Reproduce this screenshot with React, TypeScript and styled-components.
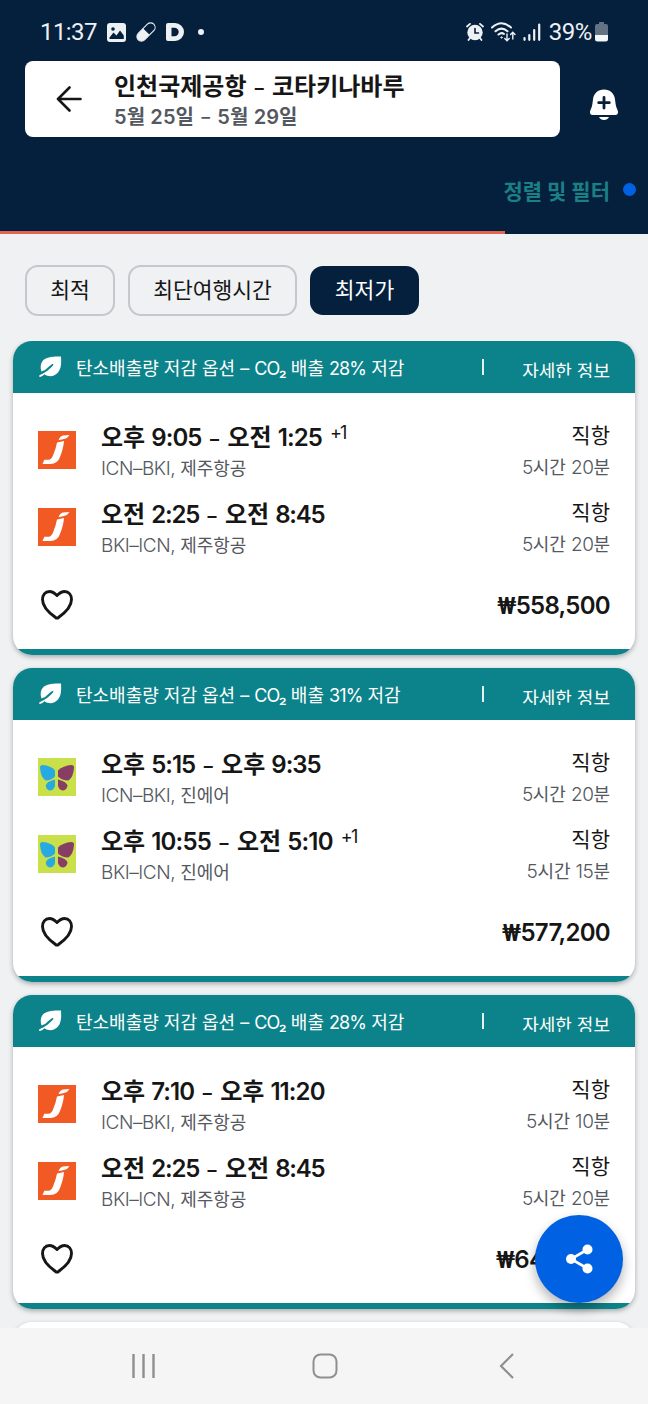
import React from 'react';
import styled, { createGlobalStyle } from 'styled-components';

const navy = '#05203c';
const teal = '#0c838a';
const ink = '#161616';
const muted = '#545860';
const sans = "Inter, 'Noto Sans CJK KR', sans-serif";

const GlobalStyle = createGlobalStyle`
  * { box-sizing: border-box; }
  body { margin: 0; background: #eff1f2; font-family: ${sans}; color: ${ink}; }
  svg { display: block; flex: none; }
`;

const Screen = styled.div`
  width: 648px;
  height: 1404px;
  display: flex;
  flex-direction: column;
  overflow: hidden;
  background: #eff1f3;
`;

const Header = styled.header`
  height: 234px;
  flex: none;
  display: flex;
  flex-direction: column;
  background: ${navy};
`;

const StatusBar = styled.div`
  height: 61px;
  padding: 3px 40px 0;
  display: flex;
  align-items: center;
  justify-content: space-between;
  color: #eef1f4;
  font-family: Roboto, sans-serif;
  font-size: 24px;
`;

const StatusGroup = styled.div<{ $gap: number }>`
  display: flex;
  align-items: center;
  gap: ${p => p.$gap}px;
`;

const Txt = styled.span<{ $track?: number }>`
  letter-spacing: ${p => p.$track ?? 0}px;
  white-space: nowrap;
`;

const BatteryLevel = styled(Txt)`
  margin: 0 -4px 0 1px;
`;

const SearchRow = styled.div`
  height: 76px;
  padding: 0 29px 0 25px;
  display: flex;
  align-items: center;
  justify-content: space-between;
`;

const SearchBox = styled.div`
  width: 535px;
  height: 76px;
  padding-left: 31px;
  display: flex;
  align-items: center;
  gap: 32px;
  border-radius: 8px;
  background: #fff;
`;

const AlertButton = styled.div`
  padding-top: 12px;
`;

const RouteText = styled.div`
  padding-top: 5px;
  display: flex;
  flex-direction: column;
`;

const RouteTitle = styled(Txt)`
  font-size: 24px;
  line-height: 31px;
  font-weight: 700;
`;

const RouteDates = styled(Txt)`
  font-size: 20px;
  line-height: 30px;
  font-weight: 600;
  color: ${muted};
`;

const FilterRow = styled.div`
  flex: 1;
  padding: 11px 12px 0 13px;
  display: flex;
  align-items: center;
  justify-content: flex-end;
  gap: 13px;
  color: #1b7f86;
  font-size: 21px;
  font-weight: 700;
`;

const FilterDot = styled.span`
  width: 13px;
  height: 13px;
  border-radius: 50%;
  background: #0062e3;
`;

const Progress = styled.div`
  width: 505px;
  height: 3px;
  background: #e2654f;
`;

const Chips = styled.div`
  height: 107px;
  flex: none;
  padding: 5px 0 0 25px;
  display: flex;
  align-items: center;
  gap: 13px;
`;

const Chip = styled.button<{ $w: number; $active?: boolean }>`
  width: ${p => p.$w}px;
  height: ${p => (p.$active ? 49 : 51)}px;
  padding: 0 0 4px;
  border: ${p => (p.$active ? '0' : '2px solid #c3c8cb')};
  border-radius: 13px;
  background: ${p => (p.$active ? navy : 'transparent')};
  color: ${p => (p.$active ? '#fff' : ink)};
  font-family: ${sans};
  font-size: 21.5px;
`;

const List = styled.main`
  height: 987px;
  flex: none;
  padding: 0 13px;
  display: flex;
  flex-direction: column;
  gap: 13px;
  overflow: hidden;
`;

const Card = styled.article`
  height: 314px;
  flex: none;
  display: flex;
  flex-direction: column;
  overflow: hidden;
  border-radius: 19px;
  background: #fff;
  box-shadow: 0 2px 5px rgba(0, 0, 0, 0.3);
`;

const CardBase = styled.div`
  height: 6px;
  flex: none;
  background: ${teal};
`;

const EcoBar = styled.div`
  height: 52px;
  flex: none;
  padding: 0 25px;
  display: flex;
  align-items: center;
  background: ${teal};
  color: #fff;
  font-size: 18px;
`;

const EcoLabel = styled(Txt)`
  width: 420px;
  flex: none;
  padding: 0 0 1px 14px;
`;

const Divider = styled.span`
  width: 2px;
  height: 16px;
  background: #e3f1f1;
`;

const MoreInfo = styled.span`
  height: 16px;
  margin: 5px 0 0 auto;
  overflow: hidden;
  line-height: 20px;
`;

const CardBody = styled.div`
  flex: 1;
  padding: 27px 25px 0 25px;
  display: flex;
  flex-direction: column;
`;

const Legs = styled.div`
  display: flex;
  flex-direction: column;
  gap: 15px;
`;

const Leg = styled.div`
  height: 62px;
  display: flex;
  align-items: center;
`;

const Logo = styled.div`
  padding-bottom: 2px;
`;

const LegInfo = styled.div`
  margin-left: 25px;
  padding-top: 1px;
  flex: 1;
  display: flex;
  flex-direction: column;
`;

const LegEnd = styled.div`
  display: flex;
  flex-direction: column;
  align-items: flex-end;
`;

const Times = styled(Txt)`
  font-size: 24px;
  line-height: 34px;
  height: 34px;
  font-weight: 600;
`;

const NextDay = styled.sup`
  margin-left: 8px;
  font-size: 18px;
  letter-spacing: -1.7px;
  line-height: 1;
  font-weight: 400;
  vertical-align: 7px;
`;

const Dash = styled.span<{ $size: number; $gap: number }>`
  margin: 0 ${p => p.$gap}px;
  font-size: ${p => p.$size}px;
  line-height: 1;
  vertical-align: 1px;
`;

const Stops = styled(Txt)`
  font-size: 21px;
  line-height: 32px;
  padding-bottom: 2px;
`;

const Small = styled(Txt)`
  font-size: 18px;
  line-height: 28px;
  height: 28px;
  color: ${muted};
`;

const LightLatin = styled.span`
  font-size: 19px;
  font-weight: 350;
  letter-spacing: -0.45px;
`;

const CardFooter = styled.div`
  height: 60px;
  margin-top: 16px;
  padding-left: 3px;
  display: flex;
  align-items: center;
  justify-content: space-between;
`;

const Price = styled(Txt)`
  font-size: 24px;
  font-weight: 600;
`;

const Won = styled.span`
  font-family: Roboto, sans-serif;
  font-weight: 600;
`;

const NavBar = styled.nav`
  height: 76px;
  flex: none;
  padding: 0 134px 0 131px;
  display: flex;
  align-items: center;
  justify-content: space-between;
  background: #f5f5f5;
`;

const HomeKey = styled.div`
  margin-right: 5px;
`;

const ShareButton = styled.button`
  position: absolute;
  left: 535px;
  top: 1215px;
  width: 88px;
  height: 88px;
  padding: 0;
  border: 0;
  border-radius: 50%;
  display: flex;
  align-items: center;
  justify-content: center;
  background: #0062e3;
  box-shadow: 0 6px 12px rgba(0, 0, 0, 0.3);
`;

const JejuLogo = () => (
  <svg width="38" height="38" viewBox="0 0 38 38">
    <rect width="38" height="38" fill="#f15a22" />
    <path d="M20.500 9.300Q22 5 25 4.600L31.500 4Q29.500 7.500 26 8.100Z" fill="#fff" />
    <path d="M19 11.500L26 10Q25.500 17 22 26Q19.500 33 12.500 33H4.500L6.300 28.800H10.500Q13.500 28.500 15 24.500Q17.800 18 19 11.500Z" fill="#fff" />
  </svg>
);

const JinLogo = () => (
  <svg width="38" height="38" viewBox="0 0 38 38">
    <rect width="38" height="38" fill="#c9e04b" />
    <path d="M2 9.500Q2 7 4.500 7Q13 7.500 17 12.500V18.500Q13 22.500 7.500 22.500Q2.500 19 2 9.500Z" fill="#27a9e1" />
    <path d="M36 9.500Q36 7 33.500 7Q25 7.500 20 12.500V18.500Q24 22.500 30.500 22.500Q35.500 19 36 9.500Z" fill="#873d64" />
    <path d="M17 21.500V28Q15.500 32.500 11.500 32.500Q8 31.500 7.800 27.500Q8.500 23.500 17 21.500Z" fill="#27a9e1" />
    <path d="M20 21.500V28Q21.500 32.500 25.500 32.500Q29 31.500 29.500 27.500Q28.500 23.500 20 21.500Z" fill="#873d64" />
  </svg>
);

const LeafIcon = () => (
  <svg width="24" height="22" viewBox="0 0 24 22">
    <path d="M23 0.500C15 0.500 9.500 1 6 3.500C2.500 6.500 2 11 3.500 15.500Q7.500 14.500 11 10.500L14.200 8Q15.800 7.600 15.200 9.200C12.500 12.500 8 16.500 1.500 19.300Q0.300 20.500 2 21Q4.500 20.200 6.500 18.200C11 21.500 16.500 20.500 20 16.500C23 13 23.500 8 23 0.500Z" fill="#fff" />
  </svg>
);

const HeartIcon = () => (
  <svg width="32" height="30" viewBox="0 0 32 30" fill="none">
    <path d="M16 5.500C13 2.500 11.500 1.500 8.500 1.500C4 1.500 1.500 5 1.500 9.500C1.500 17 9 23.500 14.300 27.300Q16 28.800 17.700 27.300C23 23.500 30.500 17 30.500 9.500C30.500 5 28 1.500 23.500 1.500C20.500 1.500 19 2.500 16 5.500Z" stroke={ink} strokeWidth="2.900" strokeLinejoin="round" />
  </svg>
);

const BackIcon = () => (
  <svg width="26" height="26" viewBox="0 0 26 26" fill="none" stroke={ink} strokeWidth="2.600" strokeLinecap="round" strokeLinejoin="round">
    <path d="M24.500 13H2M13.500 1.500L2 13L13.500 24.500" />
  </svg>
);

const BellIcon = () => (
  <svg width="30" height="32" viewBox="0 0 30 32">
    <path d="M15 0.500C21 0.500 25.500 4.500 26 10.500L26.700 15.500Q27 18 28.500 21C29.800 24 28.500 26 26 26H4C1.500 26 0.200 24 1.500 21Q3 18 3.300 15.500L4 10.500C4.500 4.500 9 0.500 15 0.500Z" fill="#fff" />
    <path d="M10 28H20Q18.500 31 15 31Q11.500 31 10 28Z" fill="#fff" />
    <path d="M15 8.500V19M9.700 13.700H20.300" stroke={navy} strokeWidth="2.800" strokeLinecap="round" />
  </svg>
);

const PhotoIcon = () => (
  <svg width="19" height="19" viewBox="0 0 19 19">
    <rect width="19" height="19" rx="3" fill="#eef1f4" />
    <circle cx="6" cy="6" r="1.800" fill={navy} />
    <path d="M2.500 14.500L6.500 9.500L9.500 12.500L13 7.500L16.800 12.500V16H2.500Z" fill={navy} />
  </svg>
);

const PillIcon = () => (
  <svg width="20" height="20" viewBox="0 0 20 20">
    <g transform="rotate(45 10 10)">
      <rect x="5.500" y="-1" width="9" height="22" rx="4.500" fill="none" stroke="#eef1f4" strokeWidth="1.100" />
      <path d="M5.500 9.500H14.500V16.500A4.500 4.500 0 0 1 5.500 16.500Z" fill="#eef1f4" />
    </g>
  </svg>
);

const LetterDIcon = () => (
  <svg width="18" height="18" viewBox="0 0 18 18">
    <path d="M2 0H9A9 9 0 0 1 9 18H2Q0 18 0 16V2Q0 0 2 0ZM5.500 4.800V13.200H8.500A4.200 4.200 0 0 0 8.500 4.800Z" fill="#eef1f4" fillRule="evenodd" />
  </svg>
);

const AlarmIcon = () => (
  <svg width="18" height="18" viewBox="0 0 18 18" fill="none" stroke="#eef1f4" strokeLinecap="round">
    <circle cx="9" cy="9.500" r="7.700" fill="#eef1f4" stroke="none" />
    <path d="M1 3.500L4 0.900M17 3.500L14 0.900M4 15L2.500 17M14 15L15.500 17" strokeWidth="1.800" />
    <path d="M9 5.500V10H12.500" stroke={navy} strokeWidth="1.600" />
  </svg>
);

const WifiIcon = () => (
  <svg width="25" height="20" viewBox="0 0 25 20" fill="none" stroke="#eef1f4" strokeWidth="2" strokeLinecap="round">
    <path d="M1 5.500Q10.500 -3 20 5.500M4.500 9.300Q10.500 4 16.500 9.300M7.500 12.500Q10.500 10 13 12" />
    <circle cx="10.500" cy="15.500" r="0.700" strokeWidth="1" />
    <path d="M16 12V18.500M13.800 16.500L16 18.700L18.200 16.500M21.800 17V10.500M19.600 12.500L21.800 10.300L24 12.500" strokeWidth="1.400" />
  </svg>
);

const SignalIcon = () => (
  <svg width="18" height="18" viewBox="0 0 18 18" stroke="#eef1f4" strokeWidth="2.200" strokeLinecap="round">
    <path d="M1.500 15V16.800M6.300 12V16.800M11.200 7V16.800M16.200 1.500V16.800" />
  </svg>
);

const BatteryIcon = () => (
  <svg width="13" height="20" viewBox="0 0 13 20">
    <path d="M4 0H9V2H11Q13 2 13 4V13H0V4Q0 2 2 2H4Z" fill="#627283" />
    <path d="M0 13H13V17Q13 19.500 10.500 19.500H2.500Q0 19.500 0 17Z" fill="#f4f6f7" />
  </svg>
);

const DotIcon = () => (
  <svg width="10" height="6" viewBox="0 0 10 6"><circle cx="7" cy="3" r="3" fill="#eef1f4" /></svg>
);

const ShareIcon = () => (
  <svg width="27" height="30" viewBox="0 0 27 30" fill="#fff" stroke="#fff">
    <path d="M21.500 5.500L5 15L21.500 24.500" fill="none" strokeWidth="2.600" />
    <g stroke="none">
      <circle cx="21.500" cy="5.500" r="5" />
      <circle cx="5" cy="15" r="5" />
      <circle cx="21.500" cy="24.500" r="5" />
    </g>
  </svg>
);

const RecentsIcon = () => (
  <svg width="25" height="26" viewBox="0 0 25 26" stroke="#8f8f8f" strokeWidth="2.400">
    <path d="M2.500 1V25M12.500 1V25M22.500 1V25" />
  </svg>
);

const HomeIcon = () => (
  <svg width="26" height="26" viewBox="0 0 26 26" fill="none">
    <rect x="1.500" y="1.500" width="23" height="23" rx="7" stroke="#8f8f8f" strokeWidth="2" />
  </svg>
);

const NavBackIcon = () => (
  <svg width="15" height="26" viewBox="0 0 15 26" fill="none" stroke="#8f8f8f" strokeWidth="2.200">
    <path d="M14 1L2 13L14 25" />
  </svg>
);

type Airline = 'jeju' | 'jin';
interface LegData { times: string; codes: string; duration: [number, number]; nextDay?: boolean; track: number }
interface Offer { airline: Airline; carrier: string; saving: string; price: string; legs: LegData[] }

const offers: Offer[] = [
  {
    airline: 'jeju', carrier: '제주항공', saving: '28%', price: '558,500',
    legs: [
      { times: '오후 9:05 – 오전 1:25', codes: 'ICN–BKI,', duration: [5, 20], nextDay: true, track: -0.9 },
      { times: '오전 2:25 – 오전 8:45', codes: 'BKI–ICN,', duration: [5, 20], track: -1.2 },
    ],
  },
  {
    airline: 'jin', carrier: '진에어', saving: '31%', price: '577,200',
    legs: [
      { times: '오후 5:15 – 오후 9:35', codes: 'ICN–BKI,', duration: [5, 20], track: -1 },
      { times: '오후 10:55 – 오전 5:10', codes: 'BKI–ICN,', duration: [5, 15], nextDay: true, track: -0.8 },
    ],
  },
  {
    airline: 'jeju', carrier: '제주항공', saving: '28%', price: '640,800',
    legs: [
      { times: '오후 7:10 – 오후 11:20', codes: 'ICN–BKI,', duration: [5, 10], track: -0.9 },
      { times: '오전 2:25 – 오전 8:45', codes: 'BKI–ICN,', duration: [5, 20], track: -1.2 },
    ],
  },
];

/* Tightens the clock figures while the Korean words keep their natural spacing. */
const TimeRange = ({ text, track }: { text: string; track: number }) => (
  <>
    {text.split(/([\d:]+|–)/).map((part, i) => {
      if (part === '–') return <Dash key={i} $size={18} $gap={2.4}>–</Dash>;
      return i % 2 ? <Txt key={i} $track={track}>{part}</Txt> : part;
    })}
  </>
);

const OfferCard = ({ offer }: { offer: Offer }) => (
  <Card>
    <EcoBar>
      <LeafIcon />
      <EcoLabel>
        탄소배출량 저감 옵션 – <Txt $track={-0.9}>CO₂</Txt> 배출 <Txt $track={-0.9}>{offer.saving}</Txt> 저감
      </EcoLabel>
      <Divider />
      <MoreInfo>자세한 정보</MoreInfo>
    </EcoBar>
    <CardBody>
      <Legs>
        {offer.legs.map(leg => (
          <Leg key={leg.times}>
            <Logo>{offer.airline === 'jeju' ? <JejuLogo /> : <JinLogo />}</Logo>
            <LegInfo>
              <Times>
                <TimeRange text={leg.times} track={leg.track} />
                {leg.nextDay && <NextDay>+1</NextDay>}
              </Times>
              <Small><LightLatin>{leg.codes}</LightLatin> {offer.carrier}</Small>
            </LegInfo>
            <LegEnd>
              <Stops>직항</Stops>
              <Small>
                <LightLatin>{leg.duration[0]}</LightLatin>시간 <LightLatin>{leg.duration[1]}</LightLatin>분
              </Small>
            </LegEnd>
          </Leg>
        ))}
      </Legs>
      <CardFooter>
        <HeartIcon />
        <Price $track={-0.7}><Won>₩</Won>{offer.price}</Price>
      </CardFooter>
    </CardBody>
    <CardBase />
  </Card>
);

export default function App() {
  return (
    <Screen>
      <GlobalStyle />
      <Header>
        <StatusBar>
          <StatusGroup $gap={10}>
            <Txt $track={-0.6}>11:37</Txt>
            <PhotoIcon />
            <PillIcon />
            <LetterDIcon />
            <DotIcon />
          </StatusGroup>
          <StatusGroup $gap={7}>
            <AlarmIcon />
            <WifiIcon />
            <SignalIcon />
            <BatteryLevel $track={-0.4}>39%</BatteryLevel>
            <BatteryIcon />
          </StatusGroup>
        </StatusBar>
        <SearchRow>
          <SearchBox>
            <BackIcon />
            <RouteText>
              <RouteTitle>인천국제공항 <Dash $size={18} $gap={2.6}>–</Dash> 코타키나바루</RouteTitle>
              <RouteDates $track={0.1}>5월 25일 <Dash $size={17} $gap={2.2}>–</Dash> 5월 29일</RouteDates>
            </RouteText>
          </SearchBox>
          <AlertButton><BellIcon /></AlertButton>
        </SearchRow>
        <FilterRow>
          <Txt>정렬 및 필터</Txt>
          <FilterDot />
        </FilterRow>
        <Progress />
      </Header>
      <Chips>
        <Chip $w={90}>최적</Chip>
        <Chip $w={169}>최단여행시간</Chip>
        <Chip $w={109} $active>최저가</Chip>
      </Chips>
      <List>
        {offers.map((offer, i) => <OfferCard key={i} offer={offer} />)}
        <Card />
      </List>
      <NavBar>
        <RecentsIcon />
        <HomeKey><HomeIcon /></HomeKey>
        <NavBackIcon />
      </NavBar>
      <ShareButton><ShareIcon /></ShareButton>
    </Screen>
  );
}
